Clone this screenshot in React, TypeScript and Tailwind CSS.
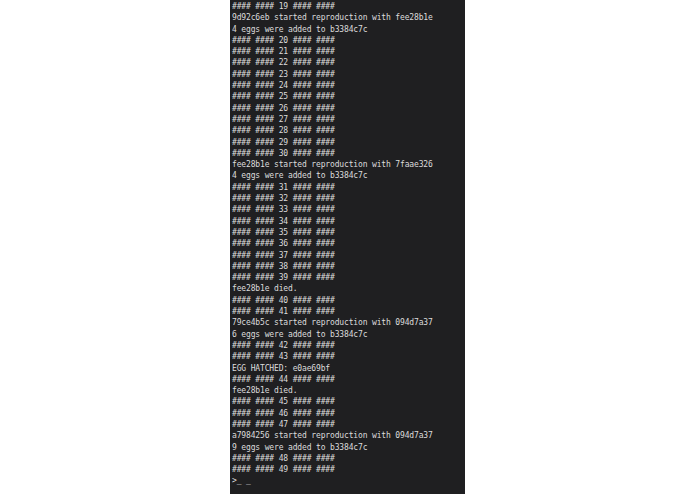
import React from "react";

const lines: string[] = [
  "#### #### 19 #### ####",
  "9d92c6eb started reproduction with fee28b1e",
  "4 eggs were added to b3384c7c",
  "#### #### 20 #### ####",
  "#### #### 21 #### ####",
  "#### #### 22 #### ####",
  "#### #### 23 #### ####",
  "#### #### 24 #### ####",
  "#### #### 25 #### ####",
  "#### #### 26 #### ####",
  "#### #### 27 #### ####",
  "#### #### 28 #### ####",
  "#### #### 29 #### ####",
  "#### #### 30 #### ####",
  "fee28b1e started reproduction with 7faae326",
  "4 eggs were added to b3384c7c",
  "#### #### 31 #### ####",
  "#### #### 32 #### ####",
  "#### #### 33 #### ####",
  "#### #### 34 #### ####",
  "#### #### 35 #### ####",
  "#### #### 36 #### ####",
  "#### #### 37 #### ####",
  "#### #### 38 #### ####",
  "#### #### 39 #### ####",
  "fee28b1e died.",
  "#### #### 40 #### ####",
  "#### #### 41 #### ####",
  "79ce4b5c started reproduction with 094d7a37",
  "6 eggs were added to b3384c7c",
  "#### #### 42 #### ####",
  "#### #### 43 #### ####",
  "EGG HATCHED: e0ae69bf",
  "#### #### 44 #### ####",
  "fee28b1e died.",
  "#### #### 45 #### ####",
  "#### #### 46 #### ####",
  "#### #### 47 #### ####",
  "a7984256 started reproduction with 094d7a37",
  "9 eggs were added to b3384c7c",
  "#### #### 48 #### ####",
  "#### #### 49 #### ####",
  ">_ _",
];

export default function App() {
  return (
    <div className="w-[695px] h-[494px] bg-white flex justify-center overflow-hidden">
      <div className="w-[235px] h-[494px] bg-[#1f1f21] pl-[2px] pt-[1px] font-['DejaVu_Sans_Mono',monospace] text-[8px] tracking-[-0.15px] leading-[11.29px] text-[#dcdcdc] whitespace-pre">
        {lines.map((l, i) => (
          <div key={i}>{l}</div>
        ))}
      </div>
    </div>
  );
}
